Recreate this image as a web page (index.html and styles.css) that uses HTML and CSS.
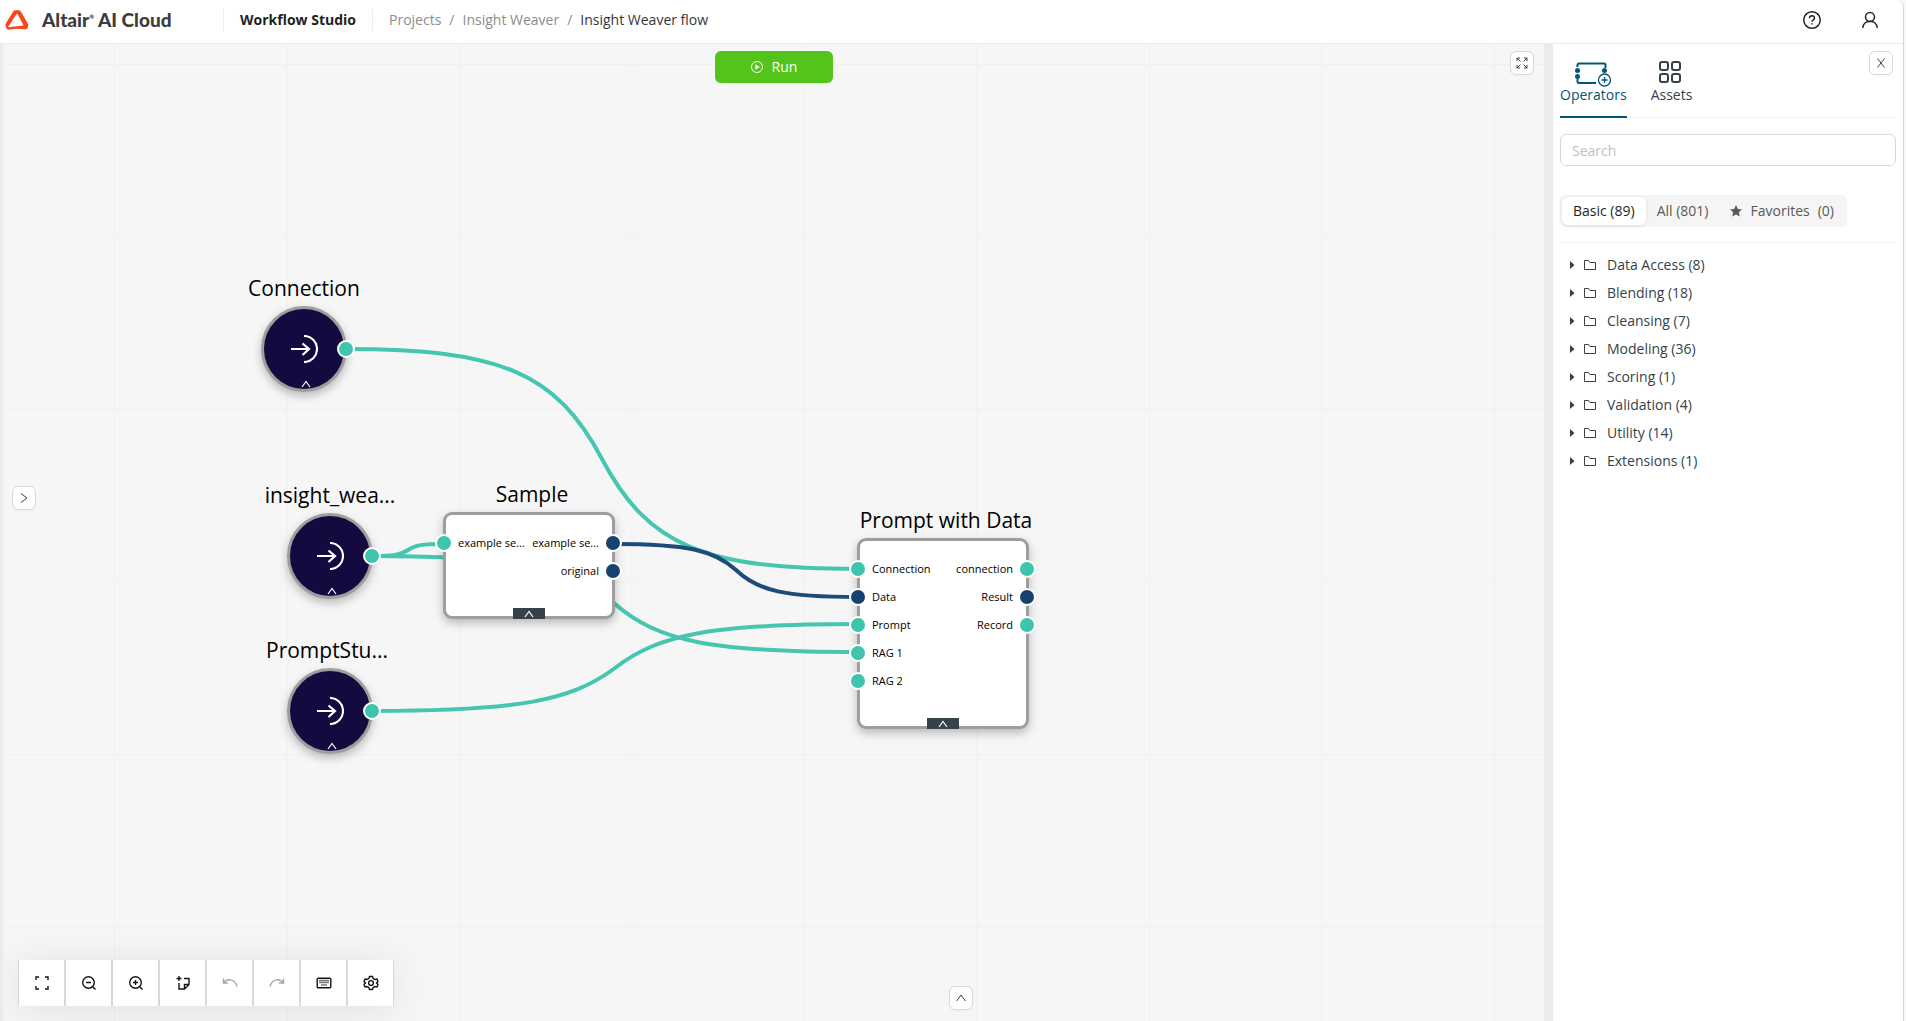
FILE: index.html
```html
<!DOCTYPE html>
<html lang="en">
<head>
  <meta charset="UTF-8" />
  <meta name="viewport" content="width=device-width, initial-scale=1.0" />
  <title>Workflow Studio</title>
  <link rel="stylesheet" href="styles.css">
</head>
<body>
  <!-- shared icons -->
  <svg class="sprite" aria-hidden="true">
    <symbol id="i-up" viewBox="0 0 10 8"><path d="M1 7L5 1.500L9 7" /></symbol>
    <symbol id="i-input" viewBox="0 0 28 28"><path d="M1 14H19M12.500 8.500L19 14L12.500 20M14 1A13 13 0 0 1 14 27" /></symbol>
    <symbol id="i-folder" viewBox="0 0 12 12"><path d="M0.500 1.500H4.500L6 3.500H11.500V10.500H0.500Z" /></symbol>
    <symbol id="i-caret" viewBox="0 0 6 8"><path d="M0 0L4.500 4L0 8Z" /></symbol>
  </svg>

  <div class="app">
    <header class="header">
      <a class="brand" href="#">
        <svg class="logo" viewBox="0 0 24 20"><path fill-rule="evenodd" d="M9.300 0.300H14.200L15.800 1.600L23.400 14.600L22.600 18.600L20.400 19.200L12 18.700L3.200 19.800L1.800 18.900L0.400 15.200L0.900 13.200L8.100 1.800ZM11.700 3.800L2.900 17.200L18.600 15.500L12.500 3.800Z" /></svg>
        <span>Altair<sup>®</sup> AI Cloud</span>
      </a>
      <strong class="product">Workflow Studio</strong>
      <nav class="crumbs">
        <a href="#">Projects</a><span>/</span><a href="#">Insight Weaver</a><span>/</span><a class="current" href="#">Insight Weaver flow</a>
      </nav>
      <div class="account">
        <button class="icon-btn" aria-label="Help">
          <svg width="20" height="20" viewBox="0 0 20 20"><circle cx="10" cy="10" r="8.300" /><path d="M7.500 8.200C7.500 5 12.500 5 12.500 8C12.500 9.800 10 9.800 10 11.800M10 13.200V14.600" /></svg>
        </button>
        <button class="icon-btn" aria-label="Account">
          <svg width="20" height="20" viewBox="0 0 20 20"><circle cx="10" cy="7" r="4.500" /><path d="M2.800 18C3.300 9 16.700 9 17.200 18" /></svg>
        </button>
      </div>
    </header>

    <div class="workspace">
      <main class="canvas">
        <svg class="wires">
          <path d="M343 305C497 305 553 328 599 415C645 502 701 525 855 525" />
          <path d="M369 512C390 512 398 511 405 506C412 501 420 500 440 500" />
          <path d="M369 512C515 512 568 522 612 560C656 598 709 608 855 608" />
          <path d="M369 667C515 667 568 657 612 624C656 590 709 580 855 580" />
          <path class="data" d="M611 500C684 500 711 506 733 526C755 547 782 553 855 553" />
        </svg>

        <section class="node source connection">
          <h2>Connection</h2>
          <div class="disc">
            <svg class="glyph"><use href="#i-input" /></svg>
            <svg class="chevron"><use href="#i-up" /></svg>
            <i class="dot"></i>
          </div>
        </section>

        <section class="node source insight">
          <h2>insight_wea...</h2>
          <div class="disc">
            <svg class="glyph"><use href="#i-input" /></svg>
            <svg class="chevron"><use href="#i-up" /></svg>
            <i class="dot"></i>
          </div>
        </section>

        <section class="node source prompt-studio">
          <h2>PromptStu...</h2>
          <div class="disc">
            <svg class="glyph"><use href="#i-input" /></svg>
            <svg class="chevron"><use href="#i-up" /></svg>
            <i class="dot"></i>
          </div>
        </section>

        <section class="node operator sample">
          <h2>Sample</h2>
          <div class="box">
            <ul class="ports">
              <li><i class="dot"></i>example se...</li>
            </ul>
            <ul class="ports out">
              <li><i class="dot data"></i>example se...</li>
              <li><i class="dot data"></i>original</li>
            </ul>
            <button class="toggle" aria-label="Expand"><svg class="chevron"><use href="#i-up" /></svg></button>
          </div>
        </section>

        <section class="node operator prompt-data">
          <h2>Prompt with Data</h2>
          <div class="box">
            <ul class="ports">
              <li><i class="dot"></i>Connection</li>
              <li><i class="dot data"></i>Data</li>
              <li><i class="dot"></i>Prompt</li>
              <li><i class="dot"></i>RAG 1</li>
              <li><i class="dot"></i>RAG 2</li>
            </ul>
            <ul class="ports out">
              <li><i class="dot"></i>connection</li>
              <li><i class="dot data"></i>Result</li>
              <li><i class="dot"></i>Record</li>
            </ul>
            <button class="toggle" aria-label="Expand"><svg class="chevron"><use href="#i-up" /></svg></button>
          </div>
        </section>

        <button class="run">
          <svg width="14" height="14" viewBox="0 0 14 14"><circle cx="7" cy="7" r="5.500" /><path d="M5.300 4.300L9.800 7L5.300 9.700Z" /></svg>
          Run
        </button>
        <button class="mini expand" aria-label="Fullscreen">
          <svg width="14" height="14" viewBox="0 0 14 14"><path d="M2 5V2H5M2 2L5.500 5.500M9 2H12V5M12 2L8.500 5.500M2 9V12H5M2 12L5.500 8.500M12 9V12H9M12 12L8.500 8.500" /></svg>
        </button>
        <button class="mini open-left" aria-label="Open left panel">
          <svg width="12" height="12" viewBox="0 0 12 12"><path d="M3 1.500L9 6L3 10.500" /></svg>
        </button>
        <button class="mini open-bottom" aria-label="Open bottom panel">
          <svg width="12" height="12" viewBox="0 0 12 12"><path d="M1.500 9L6 3L10.500 9" /></svg>
        </button>

        <div class="toolbar">
          <button aria-label="Fit to screen"><svg viewBox="0 0 16 16"><path d="M2 5V2H5M11 2H14V5M14 11V14H11M5 14H2V11" /></svg></button>
          <button aria-label="Zoom out"><svg viewBox="0 0 16 16"><circle cx="7.500" cy="7.500" r="5.800" /><path d="M5 7.500H10M11.700 11.700L14.500 14.500" /></svg></button>
          <button aria-label="Zoom in"><svg viewBox="0 0 16 16"><circle cx="7.500" cy="7.500" r="5.800" /><path d="M5 7.500H10M7.500 5V10M11.700 11.700L14.500 14.500" /></svg></button>
          <button aria-label="Add note"><svg viewBox="0 0 16 16"><path d="M4 1V6M1.500 3.500H6.500M4 8V14H9.500L14 9.500V3.500H9M14 9.500H9.500V14" /></svg></button>
          <button aria-label="Undo" disabled><svg viewBox="0 0 16 16"><path d="M1.500 3.500V8H6M1.500 8C4.500 3.500 12.500 3 15 11.500" /></svg></button>
          <button aria-label="Redo" disabled><svg viewBox="0 0 16 16"><path d="M14.500 3.500V8H10M14.500 8C11.500 3.500 3.500 3 1 11.500" /></svg></button>
          <button aria-label="Shortcuts"><svg viewBox="0 0 16 16"><rect x="1.200" y="3.200" width="13.600" height="9.600" rx="1" /><path class="keys" d="M3 5.500H13M3 7.500H13M5 10H11" /></svg></button>
          <button aria-label="Settings"><svg viewBox="0 0 16 16"><circle cx="8" cy="8" r="2.400" /><path d="M6.500 1.500H9.500L10.200 3.400L12.200 4.500L14 4L15 6.500L13.500 8L15 9.500L14 12L12.200 11.500L10.200 12.600L9.500 14.500H6.500L5.800 12.600L3.800 11.500L2 12L1 9.500L2.500 8L1 6.500L2 4L3.800 4.500L5.800 3.400Z" /></svg></button>
        </div>
      </main>

      <aside class="panel">
        <button class="mini close" aria-label="Close panel">
          <svg width="12" height="12" viewBox="0 0 12 12"><path d="M2.500 1.500L9.500 10.500M9.500 1.500L2.500 10.500" /></svg>
        </button>
        <div class="tabs" role="tablist">
          <button class="tab active" role="tab" aria-selected="true">
            <svg width="36" height="26" viewBox="0 0 36 26">
              <path d="M2.500 5V3Q2.500 1.500 4 1.500H29Q30.500 1.500 30.500 3V6M2.500 17V19.500Q2.500 21 4 21H21" />
              <g class="solid"><circle cx="2.500" cy="8.500" r="2.500" /><circle cx="2.500" cy="14.500" r="2.500" /><circle cx="29.500" cy="8.500" r="2.500" /></g>
              <path class="thin" d="M29.500 15V21M26.500 18H32.500" /><circle class="thin" cx="29.500" cy="18" r="6" />
            </svg>
            Operators
          </button>
          <button class="tab" role="tab" aria-selected="false">
            <svg width="24" height="26" viewBox="0 0 24 26"><rect x="1" y="0" width="8" height="8" rx="2" /><rect x="13" y="0" width="8" height="8" rx="2" /><rect x="1" y="12" width="8" height="8" rx="2" /><rect x="13" y="12" width="8" height="8" rx="2" /></svg>
            Assets
          </button>
        </div>

        <input class="search" type="text" placeholder="Search" aria-label="Search operators" />

        <div class="filters">
          <button class="active">Basic (89)</button>
          <button>All (801)</button>
          <button><svg width="12" height="12" viewBox="0 0 12 12"><path d="M6 0L7.800 3.900L12 4.400L8.900 7.300L9.700 11.600L6 9.500L2.300 11.600L3.100 7.300L0 4.400L4.200 3.900Z" /></svg>Favorites <span>(0)</span></button>
        </div>

        <ul class="tree">
          <li><svg class="caret"><use href="#i-caret" /></svg><svg class="folder"><use href="#i-folder" /></svg>Data Access (8)</li>
          <li><svg class="caret"><use href="#i-caret" /></svg><svg class="folder"><use href="#i-folder" /></svg>Blending (18)</li>
          <li><svg class="caret"><use href="#i-caret" /></svg><svg class="folder"><use href="#i-folder" /></svg>Cleansing (7)</li>
          <li><svg class="caret"><use href="#i-caret" /></svg><svg class="folder"><use href="#i-folder" /></svg>Modeling (36)</li>
          <li><svg class="caret"><use href="#i-caret" /></svg><svg class="folder"><use href="#i-folder" /></svg>Scoring (1)</li>
          <li><svg class="caret"><use href="#i-caret" /></svg><svg class="folder"><use href="#i-folder" /></svg>Validation (4)</li>
          <li><svg class="caret"><use href="#i-caret" /></svg><svg class="folder"><use href="#i-folder" /></svg>Utility (14)</li>
          <li><svg class="caret"><use href="#i-caret" /></svg><svg class="folder"><use href="#i-folder" /></svg>Extensions (1)</li>
        </ul>
      </aside>
    </div>
  </div>
</body>
</html>
```

FILE: styles.css
```css
* {
  box-sizing: border-box;
}
body {
  margin: 0;
  background: #f7f7f7;
  color: #36424a;
  font-family: "Open Sans", "Noto Sans", sans-serif;
  font-size: 14px;
  line-height: 22px;
}
button, input {
  font: inherit;
  color: inherit;
}
button {
  padding: 0;
  border: none;
  background: none;
  cursor: pointer;
}
a {
  color: inherit;
  text-decoration: none;
}
ul {
  list-style: none;
  margin: 0;
  padding: 0;
}
svg {
  display: block;
  fill: none;
  stroke: currentColor;
}
.sprite {
  display: none;
}
.app {
  display: flex;
  flex-direction: column;
  height: 100vh;
  margin-right: 2px;
  border-right: 1px solid #d9d9d9;
  border-top-right-radius: 8px;
  background: #fff;
  overflow: hidden;
}

/* header */
.header {
  display: flex;
  align-items: center;
  height: 44px;
  padding: 0 23px 4px 5px;
  border-bottom: 1px solid #ececec;
}
.brand {
  display: flex;
  align-items: center;
  gap: 13px;
  width: 218px;
  color: #3d3d3d;
  font-family: Lato, sans-serif;
  font-size: 19px;
  font-weight: 900;
}
.brand sup {
  font-size: 6px;
  line-height: 0;
  vertical-align: 8px;
}
.logo {
  width: 24px;
  height: 20px;
  fill: #fa4616;
  stroke: none;
}
.product {
  padding: 0 16px;
  border: 1px solid #ececec;
  border-width: 0 1px;
  color: #1f1f1f;
}
.crumbs {
  display: flex;
  padding-left: 16px;
  color: #8c8c8c;
}
.crumbs span {
  margin: 0 8px;
}
.crumbs .current {
  color: #36363a;
}
.account {
  display: flex;
  gap: 38px;
  margin-left: auto;
  color: #262626;
}
.icon-btn svg {
  stroke-width: 1.5;
}

/* canvas */
.workspace {
  display: flex;
  flex: 1;
  min-height: 0;
  border-left: 3px solid #ebebeb;
}
.canvas {
  position: relative;
  flex: 1;
  overflow: hidden;
  background-color: #f6f6f6;
  background-image: linear-gradient(90deg, #f0f0f0 1px, transparent 1px), linear-gradient(#f0f0f0 1px, transparent 1px);
  background-size: 172.5px 172.5px;
  background-position: 111px 20px;
}
.wires {
  position: absolute;
  width: 100%;
  height: 100%;
  stroke: #45c6b0;
  stroke-width: 4;
}
.wires .data {
  stroke: #1d4c7a;
}
.node {
  position: absolute;
  display: flex;
  flex-direction: column;
  align-items: center;
  color: #000;
}
.node h2 {
  margin: 0 0 4px;
  font-size: 21px;
  font-weight: 400;
  line-height: 28px;
  white-space: nowrap;
}
.source {
  width: 128px;
}
.source h2 {
  min-width: 100%;
  text-align: left;
}
.connection h2 {
  text-align: center;
}
.operator {
  width: 172px;
}
.operator h2 {
  padding-left: 6px;
}
.connection {
  left: 237px;
  top: 230px;
}
.insight {
  left: 263px;
  top: 437px;
}
.prompt-studio {
  left: 263px;
  top: 592px;
}
.sample {
  left: 440px;
  top: 436px;
}
.prompt-data {
  left: 854px;
  top: 462px;
}
.disc {
  position: relative;
  display: grid;
  place-items: center;
  width: 86px;
  height: 86px;
  border: 3px solid #9e9e9e;
  border-radius: 50%;
  background: #140a40;
  color: #fff;
  box-shadow: 0 4px 10px rgba(0, 0, 0, 0.25);
}
.glyph {
  width: 28px;
  height: 28px;
  stroke-width: 2.2;
}
.disc .chevron {
  position: absolute;
  left: 37px;
  bottom: 1px;
}
.chevron {
  width: 10px;
  height: 8px;
  stroke-width: 1.2;
}
.dot {
  flex: none;
  width: 18px;
  height: 18px;
  border: 2px solid #fff;
  border-radius: 50%;
  background: #3fc4ae;
}
.dot.data {
  background: #17426f;
}
.disc .dot {
  position: absolute;
  right: -11px;
}
.box {
  position: relative;
  display: flex;
  justify-content: space-between;
  width: 100%;
  padding: 14px 0 31px;
  border: 3px solid #9e9e9e;
  border-radius: 9px;
  background: #fff;
  box-shadow: 0 4px 10px rgba(0, 0, 0, 0.25);
}
.ports {
  margin-left: -11px;
  font-size: 11px;
}
.ports li {
  display: flex;
  align-items: center;
  gap: 5px;
  height: 28px;
}
.ports.out {
  margin: 0 -10px 0 0;
}
.ports.out li {
  flex-direction: row-reverse;
}
.toggle {
  position: absolute;
  left: 50%;
  bottom: -3px;
  display: grid;
  place-items: center;
  width: 32px;
  height: 11px;
  margin-left: -16px;
  background: #36424a;
  color: #fff;
}

/* floating controls */
.run {
  position: absolute;
  top: 7px;
  left: 50%;
  display: flex;
  align-items: center;
  justify-content: center;
  gap: 8px;
  width: 118px;
  height: 32px;
  transform: translateX(-50%);
  border-radius: 6px;
  background: #52c41a;
  color: #fff;
  box-shadow: 0 2px 0 rgba(0, 0, 0, 0.04);
}
.run path {
  fill: #fff;
  stroke: none;
}
.mini {
  position: absolute;
  display: grid;
  place-items: center;
  width: 24px;
  height: 24px;
  border: 1px solid #d9d9d9;
  border-radius: 6px;
  background: #fff;
  box-shadow: 0 2px 0 rgba(0, 0, 0, 0.02);
}
.expand {
  top: 7px;
  right: 10px;
}
.open-left {
  top: 442px;
  left: 9px;
}
.open-bottom {
  bottom: 11px;
  left: 946px;
}
.close {
  top: 7px;
  right: 10px;
}
.toolbar {
  position: absolute;
  left: 15px;
  bottom: 15px;
  display: flex;
  box-shadow: 0 4px 40px rgba(0, 0, 0, 0.09);
}
.toolbar button {
  display: grid;
  place-items: center;
  width: 47px;
  height: 46px;
  border: 1px solid #d9d9d9;
  border-width: 0 1px;
  background: #fff;
  color: #141414;
}
.toolbar button:disabled {
  color: #a6a6a6;
}
.toolbar svg {
  width: 16px;
  height: 16px;
  stroke-width: 1.4;
}
.toolbar .keys {
  stroke: #777;
}

/* right panel */
.panel {
  position: relative;
  width: 359px;
  padding: 12px 7px 0;
  border-left: 9px solid #ebebeb;
  background: #fff;
}
.tabs {
  display: flex;
  gap: 24px;
  height: 62px;
  margin-bottom: 16px;
  border-bottom: 1px solid #f0f0f0;
}
.tab {
  display: flex;
  flex-direction: column;
  align-items: center;
  height: 62px;
  padding-top: 6px;
  border-bottom: 2px solid transparent;
}
.tab svg {
  margin-bottom: -4px;
  overflow: visible;
  stroke-width: 2;
}
.tab .solid {
  fill: currentColor;
  stroke: none;
}
.tab .thin {
  stroke-width: 1.3;
}
.tab.active {
  border-color: #005776;
  color: #005776;
}
.search {
  display: block;
  width: 100%;
  height: 32px;
  padding: 4px 11px;
  border: 1px solid #d9d9d9;
  border-radius: 6px;
  outline: none;
}
.search::placeholder {
  color: #bfbfbf;
}
.filters {
  display: inline-flex;
  margin-top: 29px;
  padding: 2px;
  border-radius: 6px;
  background: #f5f5f5;
  color: #595959;
  vertical-align: top;
}
.filters button {
  display: flex;
  align-items: center;
  height: 28px;
  padding: 0 11px;
  border-radius: 6px;
}
.filters .active {
  background: #fff;
  color: #1f1f1f;
  box-shadow: 0 1px 4px rgba(0, 0, 0, 0.1);
}
.filters svg {
  margin-right: 8px;
  fill: currentColor;
  stroke: none;
}
.filters span {
  margin-left: 8px;
}
.tree {
  margin-top: 15px;
  padding: 8px 10px;
  border-top: 1px solid #f0f0f0;
}
.tree li {
  display: flex;
  align-items: center;
  height: 28px;
}
.caret {
  width: 6px;
  height: 8px;
  margin-right: 8px;
  fill: #36424a;
  stroke: none;
}
.folder {
  width: 12px;
  height: 12px;
  margin-right: 11px;
}
```
